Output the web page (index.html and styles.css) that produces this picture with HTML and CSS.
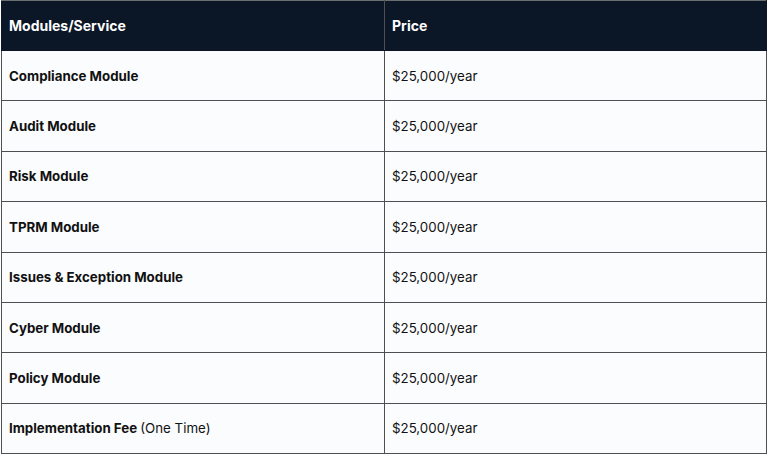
FILE: index.html
```html
<!DOCTYPE html>
<html>
<head>
<meta charset="utf-8">
<link rel="stylesheet" href="styles.css">
</head>
<body>
<table class="price-table">
  <thead>
    <tr class="head-row"><th class="col-a">Modules/Service</th><th class="col-b">Price</th></tr>
  </thead>
  <tbody>
    <tr><td class="name">Compliance Module</td><td class="price">$25,000/year</td></tr>
    <tr><td class="name">Audit Module</td><td class="price">$25,000/year</td></tr>
    <tr><td class="name">Risk Module</td><td class="price">$25,000/year</td></tr>
    <tr><td class="name">TPRM Module</td><td class="price">$25,000/year</td></tr>
    <tr><td class="name">Issues &amp; Exception Module</td><td class="price">$25,000/year</td></tr>
    <tr><td class="name">Cyber Module</td><td class="price">$25,000/year</td></tr>
    <tr><td class="name">Policy Module</td><td class="price">$25,000/year</td></tr>
    <tr><td class="name">Implementation Fee <span class="note">(One Time)</span></td><td class="price">$25,000/year</td></tr>
  </tbody>
</table>
</body>
</html>
```

FILE: styles.css
```css
html, body {
  margin: 0;
  padding: 0;
  background: #ffffff;
}
body {
  padding: 0 1px 0 1px;
  font-family: Inter, "Noto Sans", sans-serif;
}
.price-table {
  width: 766px;
  border-collapse: collapse;
  table-layout: fixed;
  background: #fbfcfe;
}
.col-a { width: 368px; }
.price-table th,
.price-table td {
  text-align: left;
  padding: 0 7px;
  font-size: 13.3px;
  border: 1px solid #4d4f53;
}
.head-row th {
  height: 49px;
  background: #0b1627;
  color: #ffffff;
  font-size: 14px;
  font-weight: 700;
  border-color: #0b1627 #4d4f53 #0b1627 #0b1627;
  border-top: 1px solid #6b6d70;
}
.head-row th.col-b { border-right-color: #0b1627; }
.price-table td {
  height: 49.4px;
  color: #111111;
}
.name { font-weight: 700; }
.note { font-weight: 400; }
.price { font-weight: 400; }
```
